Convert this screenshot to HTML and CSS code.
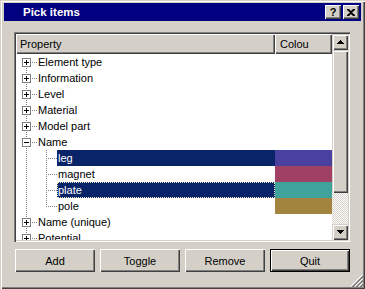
FILE: index.html
```html
<!DOCTYPE html>
<html lang="en">
<head>
    <meta charset="UTF-8">
    <title>Pick items</title>
    <link rel="stylesheet" href="styles.css">
</head>
<body>
    <div class="window">
        <div class="titlebar">
            <span class="title">Pick items</span>
            <div class="caption-btns">
                <button class="cap help">?</button>
                <button class="cap close">
                    <svg width="8" height="7" viewBox="0 0 8 7"><path d="M0 0h2l2 2 2-2h2v1L5 3.5 8 6v1H6L4 5 2 7H0V6l3-2.5L0 1z" fill="#000"/></svg>
                </button>
            </div>
        </div>

        <div class="content">
            <div class="listbox">
                <div class="list-main">
                    <div class="header">
                        <div class="hcell prop">Property</div>
                        <div class="hcell colour"><span class="clip">Colour</span></div>
                    </div>
                    <div class="tree">
                        <div class="row l1"><span class="expander plus"></span><span class="twig"></span><span class="label">Element type</span><span class="swatch"></span></div>
                        <div class="row l1"><span class="expander plus"></span><span class="twig"></span><span class="label">Information</span><span class="swatch"></span></div>
                        <div class="row l1"><span class="expander plus"></span><span class="twig"></span><span class="label">Level</span><span class="swatch"></span></div>
                        <div class="row l1"><span class="expander plus"></span><span class="twig"></span><span class="label">Material</span><span class="swatch"></span></div>
                        <div class="row l1"><span class="expander plus"></span><span class="twig"></span><span class="label">Model part</span><span class="swatch"></span></div>
                        <div class="row l1"><span class="expander"></span><span class="twig"></span><span class="label">Name</span><span class="swatch"></span></div>
                        <div class="row l2 sel"><span class="elbow"></span><span class="label">leg</span><span class="swatch" style="background:#4a40a0"></span></div>
                        <div class="row l2"><span class="elbow"></span><span class="label">magnet</span><span class="swatch" style="background:#a04064"></span></div>
                        <div class="row l2 sel focus"><span class="elbow"></span><span class="label">plate</span><span class="swatch" style="background:#3fa39c"></span></div>
                        <div class="row l2"><span class="elbow last"></span><span class="label">pole</span><span class="swatch" style="background:#a2843f"></span></div>
                        <div class="row l1"><span class="expander plus"></span><span class="twig"></span><span class="label">Name (unique)</span><span class="swatch"></span></div>
                        <div class="row l1"><span class="expander plus"></span><span class="twig"></span><span class="label">Potential</span><span class="swatch"></span></div>
                    </div>
                </div>
                <div class="vscroll">
                    <div class="sb-btn">
                        <svg width="7" height="4" viewBox="0 0 7 4"><path d="M3 0h1v1h1v1h1v1h1v1H0V3h1V2h1V1h1z" fill="#000"/></svg>
                    </div>
                    <div class="sb-thumb"></div>
                    <div class="sb-track"></div>
                    <div class="sb-btn">
                        <svg width="7" height="4" viewBox="0 0 7 4"><path d="M0 0h7v1H6v1H5v1H4v1H3V3H2V2H1V1H0z" fill="#000"/></svg>
                    </div>
                </div>
            </div>

            <div class="buttons">
                <button class="btn">Add</button>
                <button class="btn">Toggle</button>
                <button class="btn">Remove</button>
                <button class="btn default">Quit</button>
            </div>
        </div>

        <svg class="grip" width="12" height="12" viewBox="0 0 12 12">
            <path d="M11 0L0 11M11 4L4 11M11 8L8 11" stroke="#fff" stroke-width="1"/>
            <path d="M12 1L1 12M12 2L2 12M12 5L5 12M12 6L6 12M12 9L9 12M12 10L10 12" stroke="#808080" stroke-width="1"/>
        </svg>
    </div>
</body>
</html>
```

FILE: styles.css
```css
* {
    box-sizing: border-box;
}
body {
    margin: 0;
    font-family: "Liberation Sans", Arial, sans-serif;
    font-size: 11px;
    color: #000;
}
.window {
    position: relative;
    width: 365px;
    height: 289px;
    background: #d4d0c8;
    padding: 3px 4px 4px 4px;
    display: flex;
    flex-direction: column;
    box-shadow: inset 1px 1px #d4d0c8, inset 2px 2px #fff, inset -1px -1px #404040, inset -2px -2px #808080;
}
.titlebar {
    height: 18px;
    background: #000080;
    color: #fff;
    display: flex;
    align-items: center;
    padding: 0 2px 0 19px;
}
.title {
    font-weight: bold;
    font-size: 11.5px;
}
.caption-btns {
    margin-left: auto;
    display: flex;
    gap: 2px;
}
.cap {
    width: 16px;
    height: 14px;
    padding: 0;
    border: none;
    background: #d4d0c8;
    font: bold 11px "Liberation Sans", Arial, sans-serif;
    color: #000;
    display: flex;
    align-items: center;
    justify-content: center;
    box-shadow: inset 1px 1px #fff, inset -1px -1px #404040, inset -2px -2px #808080;
}
.content {
    flex: 1;
    padding: 11px 11px 0 10px;
    display: flex;
    flex-direction: column;
}
.listbox {
    height: 210px;
    padding: 2px;
    background: #fff;
    display: flex;
    box-shadow: inset 1px 1px #808080, inset 2px 2px #404040, inset -1px -1px #fff, inset -2px -2px #d4d0c8;
}
.list-main {
    flex: 1;
    display: flex;
    flex-direction: column;
    overflow: hidden;
}
.header {
    display: flex;
    height: 20px;
    flex: none;
}
.hcell {
    background: #d4d0c8;
    line-height: 20px;
    white-space: nowrap;
    overflow: hidden;
    box-shadow: inset 1px 1px #fff, inset -1px -1px #404040, inset -2px -2px #808080;
}
.hcell.prop {
    width: 259px;
    padding-left: 4px;
}
.hcell.colour {
    width: 57px;
    padding-left: 5px;
}
.clip {
    display: inline-block;
    width: 29px;
    overflow: hidden;
    vertical-align: top;
}
.tree {
    flex: 1;
    overflow: hidden;
    background: repeating-linear-gradient(to bottom, #808080 0 1px, transparent 1px 2px) 10px 8px / 1px 100% no-repeat;
}
.row {
    display: flex;
    height: 16px;
}
.row.l1 {
    padding-left: 6px;
}
.row.l2 {
    padding-left: 30px;
}
.expander {
    width: 9px;
    height: 9px;
    margin-top: 4px;
    border: 1px solid #808080;
    background: linear-gradient(#000, #000) center / 5px 1px no-repeat, #fff;
}
.expander.plus {
    background: linear-gradient(#000, #000) center / 5px 1px no-repeat,
                linear-gradient(#000, #000) center / 1px 5px no-repeat, #fff;
}
.twig {
    width: 6px;
    height: 1px;
    margin-top: 8px;
    background: repeating-linear-gradient(to right, transparent 0 1px, #808080 1px 2px);
}
.elbow {
    width: 11px;
    background: repeating-linear-gradient(to bottom, #808080 0 1px, transparent 1px 2px) 0 0 / 1px 100% no-repeat,
                repeating-linear-gradient(to right, transparent 0 1px, #808080 1px 2px) 1px 8px / 10px 1px no-repeat;
}
.elbow.last {
    background: repeating-linear-gradient(to bottom, #808080 0 1px, transparent 1px 2px) 0 0 / 1px 9px no-repeat,
                repeating-linear-gradient(to right, transparent 0 1px, #808080 1px 2px) 1px 8px / 10px 1px no-repeat;
}
.label {
    flex: 1;
    line-height: 16px;
    padding-left: 1px;
    white-space: nowrap;
}
.swatch {
    width: 57px;
}
.row.sel .label {
    background: #0a246a;
    color: #fff;
}
.row.focus .label {
    outline: 1px dotted #f0ecc0;
    outline-offset: -1px;
}
.vscroll {
    width: 16px;
    display: flex;
    flex-direction: column;
}
.sb-btn {
    height: 16px;
    background: #d4d0c8;
    display: flex;
    align-items: center;
    justify-content: center;
    box-shadow: inset 1px 1px #d4d0c8, inset 2px 2px #fff, inset -1px -1px #404040, inset -2px -2px #808080;
}
.sb-thumb {
    height: 143px;
    background: #d4d0c8;
    box-shadow: inset 1px 1px #d4d0c8, inset 2px 2px #fff, inset -1px -1px #404040, inset -2px -2px #808080;
}
.sb-track {
    flex: 1;
    background: repeating-conic-gradient(#d4d0c8 0 25%, #fff 0 50%) 0 0 / 2px 2px;
}
.buttons {
    display: grid;
    grid-template-columns: repeat(4, 80px);
    gap: 5px;
    margin-top: 7px;
    padding-left: 1px;
}
.btn {
    height: 23px;
    padding: 0;
    border: none;
    background: #d4d0c8;
    font-family: "Liberation Sans", Arial, sans-serif;
    font-size: 11px;
    font-weight: normal;
    color: #000;
    box-shadow: inset 1px 1px #fff, inset -1px -1px #404040, inset -2px -2px #808080;
}
.btn.default {
    box-shadow: inset 0 0 0 1px #000, inset 2px 2px #fff, inset -2px -2px #404040, inset -3px -3px #808080;
}
.grip {
    position: absolute;
    right: 2px;
    bottom: 2px;
}
```
